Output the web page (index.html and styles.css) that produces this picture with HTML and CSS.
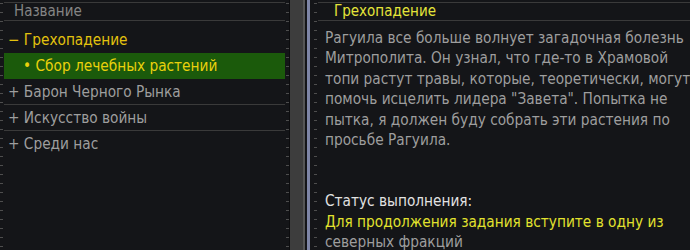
FILE: index.html
```html
<!DOCTYPE html>
<html lang="ru">
<head>
    <meta charset="UTF-8">
    <title>Журнал заданий</title>
    <link rel="stylesheet" href="styles.css">
</head>
<body>
    <div class="journal">
        <div class="quest-list">
            <div class="list-head">Название</div>
            <div class="quest open">− Грехопадение</div>
            <div class="task selected">• Сбор лечебных растений</div>
            <div class="quest lined">+ Барон Черного Рынка</div>
            <div class="quest lined">+ Искусство войны</div>
            <div class="quest">+ Среди нас</div>
        </div>

        <div class="splitter">
            <div class="grip"></div>
            <div class="edge"></div>
        </div>

        <div class="quest-info">
            <div class="info-head">Грехопадение</div>
            <div class="info-body">
                <p class="desc">Рагуила все больше волнует загадочная болезнь Митрополита. Он узнал, что где-то в Храмовой топи растут травы, которые, теоретически, могут помочь исцелить лидера "Завета". Попытка не пытка, я должен буду собрать эти растения по просьбе Рагуила.</p>
                <p class="status-label">Статус выполнения:</p>
                <p class="status"><span class="hint">Для продолжения задания вступите в одну из</span> северных фракций</p>
            </div>
        </div>
    </div>
</body>
</html>
```

FILE: styles.css
```css
body {
    margin: 0;
    background-color: #141518;
    font-family: 'DejaVu Sans Condensed', 'DejaVu Sans', sans-serif;
    font-stretch: condensed;
    font-size: 15px;
    color: #9e9e9e;
}

.journal {
    display: flex;
    height: 250px;
    overflow: hidden;
}

/* left column with tick marks on both sides */
.quest-list {
    width: 281px;
    padding: 2px 4px 0 4px;
    border-right: 1px solid #0c0c0e;
    background:
        repeating-linear-gradient(to bottom, transparent 0 3px, #4e4e4e 3px 4px, transparent 4px 9px) left top / 3px 100% no-repeat,
        repeating-linear-gradient(to bottom, transparent 0 3px, #4e4e4e 3px 4px, transparent 4px 9px) right top / 3px 100% no-repeat,
        #141518;
}

.list-head {
    height: 17px;
    line-height: 17px;
    padding-left: 10px;
    border-top: 1px solid #3a3a3a;
    border-bottom: 1px solid #3a3a3a;
    color: #858585;
    margin-bottom: 6px;
}

.quest,
.task {
    height: 26px;
    line-height: 26px;
    padding-left: 4px;
    font-size: 15.25px;
}

.quest.open {
    color: #e3c20e;
}

.quest.lined {
    border-bottom: 1px solid #3a3a3a;
    height: 25px;
}

.task {
    padding-left: 19px;
}

.task.selected {
    background-color: #1b5a0b;
    color: #ead10c;
}

.splitter {
    display: flex;
    width: 20px;
}

.grip {
    width: 13px;
    background-color: #3d3d3d;
    border-right: 2px solid #565656;
}

.edge {
    width: 3px;
    margin-left: 2px;
    background-color: #7e85a6;
}

.quest-info {
    flex: 1;
    min-width: 0;
    padding: 2px 0 0 8px;
    background:
        repeating-linear-gradient(to bottom, transparent 0 3px, #4e4e4e 3px 4px, transparent 4px 9px) 4px top / 3px 100% no-repeat,
        #141518;
}

.info-head {
    height: 17px;
    line-height: 17px;
    padding-left: 16px;
    border-top: 1px solid #3a3a3a;
    border-bottom: 1px solid #3a3a3a;
    color: #e4e43a;
}

/* the text runs a little past the window edge, as in the game */
.info-body {
    margin-right: -10px;
    padding: 7px 0 0 7px;
    font-size: 15.25px;
    line-height: 20.4px;
}

.info-body p {
    margin: 0;
}

.desc {
    margin-bottom: 41px !important;
}

.status-label {
    color: #e2e2e2;
}

.hint {
    color: #e2e22e;
}
```
